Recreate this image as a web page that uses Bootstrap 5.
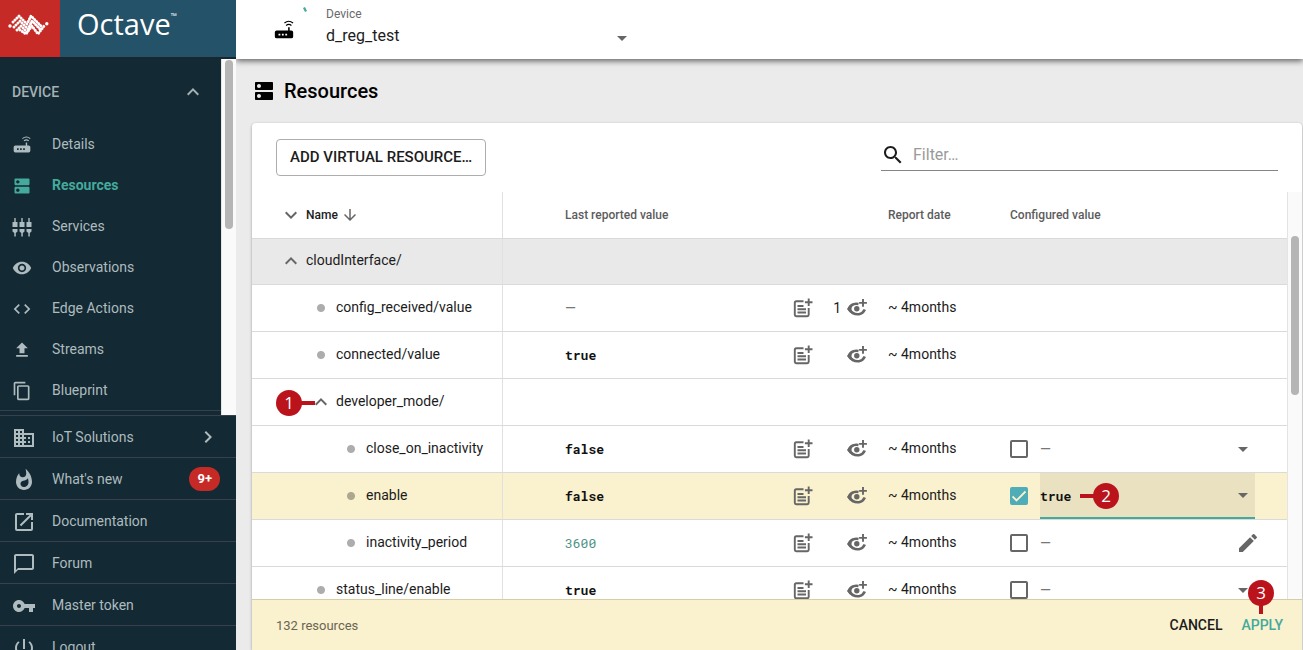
<!DOCTYPE html>
<html lang="en">
<head>
<meta charset="utf-8">
<meta name="viewport" content="width=device-width, initial-scale=1">
<title>Octave – Resources</title>
<link href="https://cdn.jsdelivr.net/npm/bootstrap@5.3.0/dist/css/bootstrap.min.css" rel="stylesheet">
<style>
  body { font-family: Roboto, "Liberation Sans", sans-serif; font-size: 14px; line-height: 20px; color: #1c1c1c; background: #ebebeb; }
  svg { display: block; fill: currentColor; flex: none; }
  .i18 { width: 18px; height: 18px; } .i20 { width: 20px; height: 20px; } .i22 { width: 22px; height: 22px; } .i24 { width: 24px; height: 24px; }
  button { color: inherit; }

  /* sidebar */
  .side { width: 236px; background: #132933; color: #aebbbf; flex: none; }
  .brand-bar { height: 57px; background: #245268; color: #fff; flex: none; }
  .brand-mark { width: 60px; background: #c62a26; }
  .brand-name { font-family: "Open Sans", sans-serif; font-weight: 400; font-size: 29px; line-height: 32px; padding-left: 17px; padding-bottom: 10px; }
  .brand-name sup { font-size: 8px; font-weight: 600; top: -8px; }
  .menu-wrap { border-top: 2px solid #1b2431; }
  .menu-head { height: 64px; padding: 2px 16px 0 12px; font-weight: 500; color: #a4b1b5; }
  .menu-item { height: 41px; padding-left: 12px; color: inherit; text-decoration: none; }
  .menu-item svg { margin-right: 20px; margin-top: 2px; }
  .menu-item.current { color: #45a99c; font-weight: 700; }
  .menu-list { padding-bottom: 4px; }
  .menu-group { border-bottom: 1px solid #33404d; }
  .foot-item { height: 42px; border-top: 1px solid #3a3f4d; padding: 0 16px 0 12px; color: inherit; text-decoration: none; }
  .foot-item > svg:first-child { margin-right: 16px; margin-top: 2px; }
  .count-pill { background: #c62a26; border-radius: 12px; font-size: 13px; line-height: 24px; padding: 0 8px; font-weight: 700; }
  .track { width: 15px; background: #fafafa; border-left: 1px solid #e4e4e4; flex: none; padding: 1px 3px 0; }
  .thumb { width: 8px; border-radius: 4px; background: #b5b5b5; }
  .side .thumb { height: 169px; }

  /* top bar */
  .top-bar { height: 59px; background: #fff; box-shadow: 0 2px 6px rgba(0,0,0,.6); flex: none; padding-left: 37px; z-index: 1; }
  .top-bar label { font-size: 12px; line-height: 16px; color: #6a6a6a; }
  .device-field { width: 302px; margin-left: 31px; padding-top: 6px; }
  .plain-select { border: 0; border-radius: 0; padding: 0 24px 0 0; background-color: transparent; background-size: 10px 5px; background-position: right 7px center; color: #1c1c1c; line-height: 20px;
    background-image: url("data:image/svg+xml,%3csvg xmlns='http://www.w3.org/2000/svg' viewBox='0 0 10 5'%3e%3cpath fill='%23666' d='M0 0h10L5 5z'/%3e%3c/svg%3e"); }
  .device-field .plain-select { font-size: 16px; line-height: 28px; background-position: right 1px bottom 9px; }
  .spinner-tick { width: 4px; height: 5px; color: #45a99c; top: 7px; left: 67px; }
  h1 { font-size: 20px; line-height: 24px; font-weight: 500; color: #000; }
  .page-head { height: 64px; padding-left: 16px; gap: 8px; flex: none; }

  /* panel */
  .panel { margin: 0 1px 0 16px; background: #fff; border-radius: 4px 4px 0 0; box-shadow: 0 1px 3px rgba(0,0,0,.35); }
  .tools { height: 69px; padding: 16px 24px 0; flex: none; }
  .add-btn { height: 37px; border: 1px solid #adadad; border-radius: 4px; font-size: 15px; font-weight: 500; padding: 0 13px; color: #1c1c1c; }
  .filter-box { width: 397px; height: 32px; border-bottom: 1px solid #858585; gap: 8px; }
  .filter-box input { border: 0; outline: 0; width: 100%; font-size: 16px; background: none; padding: 0; }
  .filter-box input::placeholder { color: #9a9a9a; }
  .grid { table-layout: fixed; width: 100%; border-collapse: separate; border-spacing: 0; }
  .grid th, .grid td { height: 47px; border-bottom: 1px solid #dadada; padding: 0 8px; vertical-align: middle; white-space: nowrap; }
  .grid th { font-size: 12px; font-weight: 500; color: #5c5c5c; }
  .grid tr.short th, .grid tr.short td { height: 46px; }
  .grid th:first-child { border-right: 1px solid #e0e0e0; }
  .grid td:first-child { border-right: 1px solid #e0e0e0; }
  .grid th:nth-child(5) { padding-left: 13px; }
  .grid td:nth-child(5) { padding: 0 0 2px 13px; }
  .grid .val { padding-left: 62px; }
  .grid .group-row td { background: #e9e9e9; padding-bottom: 2px; }
  .changed-row td { background: #faf1ce; }
  .c-name { width: 251px; } .c-note { width: 60px; } .c-eye { width: 54px; } .c-date { width: 127px; } .c-conf { width: 285px; }
  .tree { gap: 3px; padding-left: 19px; padding-bottom: 2px; color: #1c1c1c; }
  th .tree { padding-bottom: 0; }
  .tree.l2 { padding-left: 49px; } .tree.l3 { padding-left: 79px; }
  .tree svg { color: #666; }
  .tree .toggle { border: 0; background: none; padding: 2px 0 0; }
  th .toggle { padding: 0 !important; }
  .dot { width: 24px; height: 10px; margin-top: 2px; background: radial-gradient(circle, #adadad 3.5px, transparent 4.5px); }
  .changed-row .dot { background: radial-gradient(circle, #ada78f 3.5px, transparent 4.5px); }
  .mono { font-family: "Roboto Mono", "DejaVu Sans Mono", monospace; font-size: 13px; font-weight: 700; color: #111; padding-top: 3px; }
  .mono.num { font-weight: 400; color: #4f9186; }
  .act { border: 0; background: none; padding: 0; color: #666; display: block; }
  .seen { gap: 6px; }
  .dash { color: #777; }
  .conf { height: 46px; margin-right: 24px; }
  .conf .form-check-input { width: 18px; height: 18px; margin: 0 12px 0 0; border: 2px solid #666; border-radius: 2px; flex: none; box-shadow: none; background-color: transparent; }
  .conf .form-check-input:checked { background-color: #4fadb8; border-color: #4fadb8; background-size: 18px 18px;
    background-image: url("data:image/svg+xml,%3csvg xmlns='http://www.w3.org/2000/svg' viewBox='0 0 18 18'%3e%3cpath fill='none' stroke='%23faf1ce' stroke-width='1.800' d='M2.500 9.500l4 4 9-9'/%3e%3c/svg%3e"); }
  .conf .plain-select { height: 46px; font-size: 14px; color: #777; }
  .conf .plain-select.edited { font-family: "Roboto Mono", "DejaVu Sans Mono", monospace; font-size: 13px; font-weight: 700; color: #111; background-color: #e9e1c0; border-bottom: 2px solid #45a99c; padding-top: 2px; }
  .conf.editable { margin-right: 19px; }
  .panel-foot { height: 51px; background: #faf1ce; border-top: 1px solid #d5cda9; padding: 0 19px 0 24px; flex: none; }
  .panel-foot small { font-size: 13px; color: #6a6553; padding-top: 2px; }
  .flat { border: 0; background: none; padding: 0; font-weight: 500; }
  .flat.go { color: #45a99c; margin-left: 19px; }
  .panel .track { padding: 44px 3px 0; }
  .panel .thumb { height: 159px; }

  /* numbered callouts laid over the controls */
  .callout { position: absolute; width: 26px; height: 26px; border-radius: 50%; background: #ba131c; color: #fff; font: 17px/26px "Open Sans", sans-serif; text-align: center; z-index: 2; }
  .callout::before { content: ""; position: absolute; background: #ba131c; }
  .co1 { left: 24px; top: 11px; } .co1::before { left: 24px; top: 11px; width: 15px; height: 4px; }
  .co2 { left: 53px; top: 10px; } .co2::before { right: 24px; top: 11px; width: 15px; height: 4px; }
  .co3 { right: 9px; top: -35px; } .co3::before { left: 11px; top: 24px; width: 4px; height: 10px; }
</style>
</head>
<body class="d-flex vh-100 overflow-hidden">
<svg class="d-none" xmlns="http://www.w3.org/2000/svg">
  <symbol id="router" viewBox="0 0 24 24"><path fill-rule="evenodd" d="M4 12.500h12.500V9h1.700v3.500H20a2 2 0 0 1 2 2V19a2 2 0 0 1-2 2H4a2 2 0 0 1-2-2v-4.500a2 2 0 0 1 2-2M6 16v2h2v-2zm3.700 0v2h2v-2zm3.700 0v2h2v-2z"/><path fill="none" stroke="currentColor" stroke-width="1.300" d="M12.500 4.300q4.700-3.700 9.400 0M14.300 7q2.900-2.400 5.800 0"/></symbol>
  <symbol id="dns" viewBox="0 0 24 24"><path d="M20 13H4c-.55 0-1 .45-1 1v6c0 .55.45 1 1 1h16c.55 0 1-.45 1-1v-6c0-.55-.45-1-1-1zM7 19c-1.100 0-2-.9-2-2s.9-2 2-2 2 .9 2 2-.9 2-2 2zM20 3H4c-.55 0-1 .45-1 1v6c0 .55.45 1 1 1h16c.55 0 1-.45 1-1V4c0-.55-.45-1-1-1zM7 9c-1.100 0-2-.9-2-2s.9-2 2-2 2 .9 2 2-.9 2-2 2z"/></symbol>
  <symbol id="plugs" viewBox="0 0 20 20"><path d="M2.300 1h1.400v4h1.800v5H.5V5h1.800zM9.300 1h1.400v4h1.800v5h-5V5h1.800zM16.300 1h1.400v4h1.800v5h-5V5h1.800zM.5 12h5v2.500L3.800 16v3.500H2.300V16L.5 14.500zM7.500 12h5v2.500L10.800 16v3.500H9.300V16l-1.800-1.500zM14.500 12h5v2.500L17.800 16v3.500h-1.500V16l-1.800-1.500z"/></symbol>
  <symbol id="eye" viewBox="0 0 24 24"><path d="M12 4.500C7 4.500 2.730 7.610 1 12c1.730 4.390 6 7.500 11 7.500s9.270-3.110 11-7.500c-1.730-4.390-6-7.500-11-7.500zM12 17c-2.760 0-5-2.240-5-5s2.240-5 5-5 5 2.240 5 5-2.240 5-5 5zm0-8c-1.660 0-3 1.340-3 3s1.340 3 3 3 3-1.340 3-3-1.340-3-3-3z"/></symbol>
  <symbol id="code" viewBox="0 0 24 24"><path d="M9.400 16.600L4.800 12l4.600-4.600L8 6l-6 6 6 6zm5.200 0l4.600-4.600-4.600-4.600L16 6l6 6-6 6z"/></symbol>
  <symbol id="upload" viewBox="0 0 24 24"><path d="M9 16h6v-6h4l-7-7-7 7h4zm-4 2h14v2H5z"/></symbol>
  <symbol id="copy" viewBox="0 0 24 24"><path d="M16 1H4c-1.100 0-2 .9-2 2v14h2V3h12V1zm3 4H8c-1.100 0-2 .9-2 2v14c0 1.100.9 2 2 2h11c1.100 0 2-.9 2-2V7c0-1.100-.9-2-2-2zm0 16H8V7h11v14z"/></symbol>
  <symbol id="domain" viewBox="0 0 24 24"><path d="M12 7V3H2v18h20V7H12zM6 19H4v-2h2v2zm0-4H4v-2h2v2zm0-4H4V9h2v2zm0-4H4V5h2v2zm4 12H8v-2h2v2zm0-4H8v-2h2v2zm0-4H8V9h2v2zm0-4H8V5h2v2zm10 12h-8v-2h2v-2h-2v-2h2v-2h-2V9h8v10zm-2-8h-2v2h2v-2zm0 4h-2v2h2v-2z"/></symbol>
  <symbol id="fire" viewBox="0 0 24 24"><path d="M13.500.67s.74 2.650.74 4.800c0 2.060-1.350 3.730-3.410 3.730-2.070 0-3.630-1.670-3.630-3.730l.03-.36C5.210 7.510 4 10.620 4 14c0 4.420 3.580 8 8 8s8-3.580 8-8C20 8.610 17.410 3.800 13.500.67zM11.710 19c-1.780 0-3.220-1.400-3.220-3.140 0-1.620 1.050-2.760 2.810-3.120 1.770-.36 3.600-1.210 4.620-2.580.39 1.290.59 2.650.59 4.040 0 2.650-2.150 4.800-4.800 4.800z"/></symbol>
  <symbol id="open" viewBox="0 0 24 24"><path d="M14 3v2h3.590l-9.830 9.830 1.410 1.410L19 6.410V10h2V3M19 19H5V5h7V3H5c-1.110 0-2 .9-2 2v14a2 2 0 0 0 2 2h14a2 2 0 0 0 2-2v-7h-2v7z"/></symbol>
  <symbol id="chat" viewBox="0 0 24 24"><path d="M20 2H4c-1.100 0-2 .9-2 2v18l4-4h14c1.100 0 2-.9 2-2V4c0-1.100-.9-2-2-2zm0 14H6l-2 2V4h16v12z"/></symbol>
  <symbol id="key" viewBox="0 0 24 24"><path d="M12.650 10C11.830 7.670 9.610 6 7 6c-3.310 0-6 2.690-6 6s2.690 6 6 6c2.610 0 4.830-1.670 5.650-4H17v4h4v-4h2v-4H12.650zM7 14c-1.100 0-2-.9-2-2s.9-2 2-2 2 .9 2 2-.9 2-2 2z"/></symbol>
  <symbol id="power" viewBox="0 0 24 24"><path d="M13 3h-2v10h2V3zm4.830 2.170l-1.420 1.420C17.990 7.860 19 9.810 19 12c0 3.870-3.130 7-7 7s-7-3.130-7-7c0-2.190 1.010-4.140 2.580-5.420L6.170 5.170C4.230 6.820 3 9.260 3 12c0 4.970 4.030 9 9 9s9-4.030 9-9c0-2.740-1.230-5.180-3.170-6.830z"/></symbol>
  <symbol id="up" viewBox="0 0 24 24"><path d="M12 8l-6 6 1.410 1.410L12 10.830l4.590 4.580L18 14z"/></symbol>
  <symbol id="down" viewBox="0 0 24 24"><path d="M16.590 8.590L12 13.170 7.410 8.590 6 10l6 6 6-6z"/></symbol>
  <symbol id="right" viewBox="0 0 24 24"><path d="M10 6L8.590 7.410 13.170 12l-4.580 4.590L10 18l6-6z"/></symbol>
  <symbol id="sort" viewBox="0 0 24 24"><path d="M20 12l-1.410-1.410L13 16.170V4h-2v12.170l-5.580-5.590L4 12l8 8z"/></symbol>
  <symbol id="search" viewBox="0 0 24 24"><path d="M15.500 14h-.79l-.28-.27C15.410 12.590 16 11.110 16 9.500 16 5.910 13.090 3 9.500 3S3 5.910 3 9.500 5.910 16 9.500 16c1.610 0 3.090-.59 4.230-1.570l.27.28v.79l5 4.990L20.490 19l-4.990-5zm-6 0C7.010 14 5 11.990 5 9.500S7.010 5 9.500 5 14 7.010 14 9.500 11.990 14 9.500 14z"/></symbol>
  <symbol id="pencil" viewBox="0 0 24 24"><path d="M3 17.250V21h3.750L17.810 9.940l-3.750-3.750zM20.710 7.040a1 1 0 0 0 0-1.410l-2.340-2.340a1 1 0 0 0-1.410 0l-1.830 1.830 3.750 3.750z"/></symbol>
  <symbol id="note" viewBox="0 0 20 20"><path fill="none" stroke="currentColor" stroke-width="1.900" d="M10.500 3.300H3.200Q1.800 3.300 1.800 4.700V16.800Q1.800 18.200 3.200 18.200H14.300Q15.700 18.200 15.700 16.800V10M4.500 8h6M4.500 11.200h8.500M4.500 14.500h8.500M15.700 .5v7.600M11.900 4.300h7.600"/></symbol>
  <symbol id="eyeplus" viewBox="0 0 20 20"><path fill="none" stroke="currentColor" stroke-width="2.600" d="M11.500 6Q5 4.500 1.800 11Q6 17 12 16.200Q16 15.500 17.800 11.500"/><path fill="none" stroke="currentColor" stroke-width="1.900" d="M16 1v7.800M12.100 4.900h7.800"/><path d="M.2 11Q2 6.500 6 5.200Q3 11 6 16.500Q2 14.800 .2 11z"/><circle cx="9.800" cy="10.800" r="2.700"/></symbol>
</svg>

<aside class="side d-flex flex-column overflow-hidden">
  <div class="brand-bar d-flex">
    <a class="brand-mark text-white" href="#" aria-label="Home">
      <svg width="60" height="57" viewBox="0 0 60 57"><g fill="none" stroke="#fff" stroke-width="3" stroke-linecap="round" stroke-linejoin="round" stroke-dasharray="0.010 2.820"><path d="M13 22l6-6 8 8 4-8 10 10"/><path d="M13 22l0 0M16 25l4-4 8 8 4-8 8 8"/><path d="M14 27l2-2M19 28l2-2 8 8M17 30l3-3"/><path d="M20 30l6 4 6-8 6 8 6-8"/></g><g fill="none" stroke="#fff" stroke-linecap="round" stroke-width="3.400"><path d="M10 26h.01M46.800 23.800h.01"/></g></svg>
    </a>
    <div class="brand-name d-flex align-items-center">Octave<sup>™</sup></div>
  </div>
  <div class="menu-wrap d-flex">
    <div class="menu-list flex-fill"><nav class="menu-group">
      <div class="menu-head d-flex align-items-center justify-content-between">DEVICE <svg class="i24"><use href="#up"/></svg></div>
      <a class="menu-item d-flex align-items-center" href="#"><svg class="i20"><use href="#router"/></svg>Details</a>
      <a class="menu-item current d-flex align-items-center" href="#"><svg class="i20"><use href="#dns"/></svg>Resources</a>
      <a class="menu-item d-flex align-items-center" href="#"><svg class="i20"><use href="#plugs"/></svg>Services</a>
      <a class="menu-item d-flex align-items-center" href="#"><svg class="i20"><use href="#eye"/></svg>Observations</a>
      <a class="menu-item d-flex align-items-center" href="#"><svg class="i20"><use href="#code"/></svg>Edge Actions</a>
      <a class="menu-item d-flex align-items-center" href="#"><svg class="i20"><use href="#upload"/></svg>Streams</a>
      <a class="menu-item d-flex align-items-center" href="#"><svg class="i20"><use href="#copy"/></svg>Blueprint</a>
    </nav></div>
    <div class="track"><div class="thumb"></div></div>
  </div>
  <nav class="foot-menu">
    <a class="foot-item d-flex align-items-center" href="#"><svg class="i24"><use href="#domain"/></svg><span class="flex-fill">IoT Solutions</span><svg class="i24"><use href="#right"/></svg></a>
    <a class="foot-item d-flex align-items-center" href="#"><svg class="i24"><use href="#fire"/></svg><span class="flex-fill">What's new</span><span class="count-pill text-white">9+</span></a>
    <a class="foot-item d-flex align-items-center" href="#"><svg class="i24"><use href="#open"/></svg>Documentation</a>
    <a class="foot-item d-flex align-items-center" href="#"><svg class="i24"><use href="#chat"/></svg>Forum</a>
    <a class="foot-item d-flex align-items-center" href="#"><svg class="i24"><use href="#key"/></svg>Master token</a>
    <a class="foot-item d-flex align-items-center" href="#"><svg class="i24"><use href="#power"/></svg>Logout</a>
  </nav>
</aside>

<main class="d-flex flex-column flex-fill overflow-hidden">
  <header class="top-bar d-flex align-items-center position-relative">
    <svg class="i22 text-black"><use href="#router"/></svg>
    <svg class="spinner-tick position-absolute" viewBox="0 0 4 5"><path d="M0 1l2-1 2 4-2 1z"/></svg>
    <div class="device-field align-self-start">
      <label class="d-block" for="device">Device</label>
      <select class="form-select plain-select" id="device"><option>d_reg_test</option></select>
    </div>
  </header>
  <div class="page-head d-flex align-items-center"><svg class="i24 text-black"><use href="#dns"/></svg><h1 class="mb-0">Resources</h1></div>

  <section class="panel d-flex flex-column flex-fill overflow-hidden">
    <div class="tools d-flex justify-content-between align-items-start">
      <button class="btn add-btn" type="button">ADD VIRTUAL RESOURCE…</button>
      <label class="filter-box d-flex align-items-center"><svg class="i24"><use href="#search"/></svg><input type="text" placeholder="Filter…" aria-label="Filter"></label>
    </div>
    <div class="d-flex flex-fill overflow-hidden">
      <div class="flex-fill overflow-hidden">
      <table class="grid">
        <colgroup><col class="c-name"><col><col class="c-note"><col class="c-eye"><col class="c-date"><col class="c-conf"></colgroup>
        <thead><tr><th><div class="tree d-flex align-items-center"><button class="toggle" type="button" aria-label="Collapse all"><svg class="i24"><use href="#down"/></svg></button>Name<svg class="i18"><use href="#sort"/></svg></div></th><th class="val">Last reported value</th><th></th><th></th><th>Report date</th><th>Configured value</th></tr></thead>
        <tbody>
        <tr class="group-row short"><td><div class="tree d-flex align-items-center"><button class="toggle" type="button" aria-label="Collapse"><svg class="i24"><use href="#up"/></svg></button>cloudInterface/</div></td><td></td><td></td><td></td><td></td><td></td></tr>
        <tr><td><div class="tree l2 d-flex align-items-center"><span class="dot"></span>config_received/value</div></td><td class="val dash">—</td>
          <td><button class="act ms-auto" type="button" aria-label="Add note"><svg class="i20"><use href="#note"/></svg></button></td>
          <td><div class="seen d-flex align-items-center justify-content-end">1<button class="act" type="button" aria-label="Observe"><svg class="i20"><use href="#eyeplus"/></svg></button></div></td><td>~ 4months</td><td></td></tr>
        <tr><td><div class="tree l2 d-flex align-items-center"><span class="dot"></span>connected/value</div></td><td class="val mono">true</td>
          <td><button class="act ms-auto" type="button" aria-label="Add note"><svg class="i20"><use href="#note"/></svg></button></td>
          <td><button class="act ms-auto" type="button" aria-label="Observe"><svg class="i20"><use href="#eyeplus"/></svg></button></td><td>~ 4months</td><td></td></tr>
        <tr><td class="position-relative"><span class="callout co1">1</span><div class="tree l2 d-flex align-items-center"><button class="toggle" type="button" aria-label="Collapse"><svg class="i24"><use href="#up"/></svg></button>developer_mode/</div></td><td></td><td></td><td></td><td></td><td></td></tr>
        <tr><td><div class="tree l3 d-flex align-items-center"><span class="dot"></span>close_on_inactivity</div></td><td class="val mono">false</td>
          <td><button class="act ms-auto" type="button" aria-label="Add note"><svg class="i20"><use href="#note"/></svg></button></td>
          <td><button class="act ms-auto" type="button" aria-label="Observe"><svg class="i20"><use href="#eyeplus"/></svg></button></td><td>~ 4months</td>
          <td><div class="conf d-flex align-items-center"><input class="form-check-input" type="checkbox" aria-label="Configure close_on_inactivity"><select class="form-select plain-select" aria-label="close_on_inactivity"><option>—</option></select></div></td></tr>
        <tr class="changed-row"><td><div class="tree l3 d-flex align-items-center"><span class="dot"></span>enable</div></td><td class="val mono">false</td>
          <td><button class="act ms-auto" type="button" aria-label="Add note"><svg class="i20"><use href="#note"/></svg></button></td>
          <td><button class="act ms-auto" type="button" aria-label="Observe"><svg class="i20"><use href="#eyeplus"/></svg></button></td><td>~ 4months</td>
          <td><div class="conf d-flex align-items-center"><input class="form-check-input" type="checkbox" checked aria-label="Configure enable"><div class="position-relative flex-fill"><select class="form-select plain-select edited" aria-label="enable"><option>true</option></select><span class="callout co2">2</span></div></div></td></tr>
        <tr><td><div class="tree l3 d-flex align-items-center"><span class="dot"></span>inactivity_period</div></td><td class="val mono num">3600</td>
          <td><button class="act ms-auto" type="button" aria-label="Add note"><svg class="i20"><use href="#note"/></svg></button></td>
          <td><button class="act ms-auto" type="button" aria-label="Observe"><svg class="i20"><use href="#eyeplus"/></svg></button></td><td>~ 4months</td>
          <td><div class="conf editable d-flex align-items-center"><input class="form-check-input" type="checkbox" aria-label="Configure inactivity_period"><span class="dash flex-fill">—</span><button class="act" type="button" aria-label="Edit"><svg class="i24"><use href="#pencil"/></svg></button></div></td></tr>
        <tr><td><div class="tree l2 d-flex align-items-center"><span class="dot"></span>status_line/enable</div></td><td class="val mono">true</td>
          <td><button class="act ms-auto" type="button" aria-label="Add note"><svg class="i20"><use href="#note"/></svg></button></td>
          <td><button class="act ms-auto" type="button" aria-label="Observe"><svg class="i20"><use href="#eyeplus"/></svg></button></td><td>~ 4months</td>
          <td><div class="conf d-flex align-items-center"><input class="form-check-input" type="checkbox" aria-label="Configure status_line/enable"><select class="form-select plain-select" aria-label="status_line/enable"><option>—</option></select></div></td></tr>
        </tbody>
      </table>
      </div>
      <div class="track"><div class="thumb"></div></div>
    </div>
    <footer class="panel-foot d-flex align-items-center">
      <small class="flex-fill">132 resources</small>
      <button class="flat" type="button">CANCEL</button>
      <div class="position-relative"><button class="flat go" type="button">APPLY</button><span class="callout co3">3</span></div>
    </footer>
  </section>
</main>
<script src="https://cdn.jsdelivr.net/npm/bootstrap@5.3.0/dist/js/bootstrap.bundle.min.js"></script>
</body>
</html>
